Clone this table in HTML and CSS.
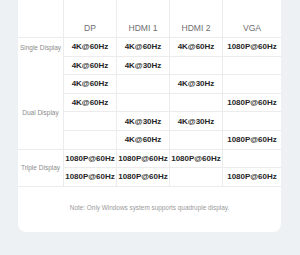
FILE: index.html
```html
<!DOCTYPE html>
<html>
<head>
<meta charset="utf-8">
<link rel="stylesheet" href="styles.css">
</head>
<body>
<div class="card">
  <div class="grid">
    <div class="cell head lab"></div>
    <div class="cell head">DP</div>
    <div class="cell head">HDMI 1</div>
    <div class="cell head">HDMI 2</div>
    <div class="cell head last">VGA</div>

    <div class="cell lab single">Single Display</div>
    <div class="cell val">4K@60Hz</div>
    <div class="cell val">4K@60Hz</div>
    <div class="cell val">4K@60Hz</div>
    <div class="cell val last">1080P@60Hz</div>

    <div class="cell lab dual">Dual Display</div>
    <div class="cell val">4K@60Hz</div>
    <div class="cell val">4K@30Hz</div>
    <div class="cell val"></div>
    <div class="cell val last"></div>

    <div class="cell val">4K@60Hz</div>
    <div class="cell val"></div>
    <div class="cell val">4K@30Hz</div>
    <div class="cell val last"></div>

    <div class="cell val">4K@60Hz</div>
    <div class="cell val"></div>
    <div class="cell val"></div>
    <div class="cell val last">1080P@60Hz</div>

    <div class="cell val"></div>
    <div class="cell val">4K@30Hz</div>
    <div class="cell val">4K@30Hz</div>
    <div class="cell val last"></div>

    <div class="cell val"></div>
    <div class="cell val">4K@60Hz</div>
    <div class="cell val"></div>
    <div class="cell val last">1080P@60Hz</div>

    <div class="cell lab triple">Triple Display</div>
    <div class="cell val">1080P@60Hz</div>
    <div class="cell val">1080P@60Hz</div>
    <div class="cell val">1080P@60Hz</div>
    <div class="cell val last"></div>

    <div class="cell val">1080P@60Hz</div>
    <div class="cell val">1080P@60Hz</div>
    <div class="cell val"></div>
    <div class="cell val last">1080P@60Hz</div>
  </div>
  <div class="note">Note: Only Windows system supports quadruple display.</div>
</div>
</body>
</html>
```
FILE: styles.css
```css
html, body {
  margin: 0;
  padding: 0;
  background: #eef1f4;
}
body {
  width: 300px;
  height: 255px;
  overflow: hidden;
  font-family: "Liberation Sans", Arial, sans-serif;
}
.card {
  margin-left: 18px;
  width: 263px;
  background: #ffffff;
  border-radius: 0 0 8px 8px;
}
.grid {
  display: grid;
  grid-template-columns: 46px 53px 53px 53px 58px;
  grid-template-rows: 38px repeat(8, 18.6px);
}
.cell {
  display: flex;
  align-items: center;
  justify-content: center;
  border-bottom: 1px solid #ececec;
  border-right: 1px solid #ececec;
  box-sizing: border-box;
  white-space: nowrap;
}
.cell.last {
  border-right: none;
}
.head {
  align-items: flex-end;
  padding-bottom: 4px;
  font-size: 8.6px;
  color: #6f6f6f;
}
.lab {
  font-size: 6.5px;
  color: #8c8c8c;
}
.single {
  border-bottom: none;
}
.dual {
  grid-row: span 5;
  padding-top: 20px;
}
.triple {
  grid-row: span 2;
}
.val {
  font-size: 8px;
  font-weight: bold;
  color: #262626;
}
.note {
  padding: 17px 0 20px;
  text-align: center;
  font-size: 6.4px;
  color: #9a9a9a;
  height: 8px;
  line-height: 8px;
}
```
